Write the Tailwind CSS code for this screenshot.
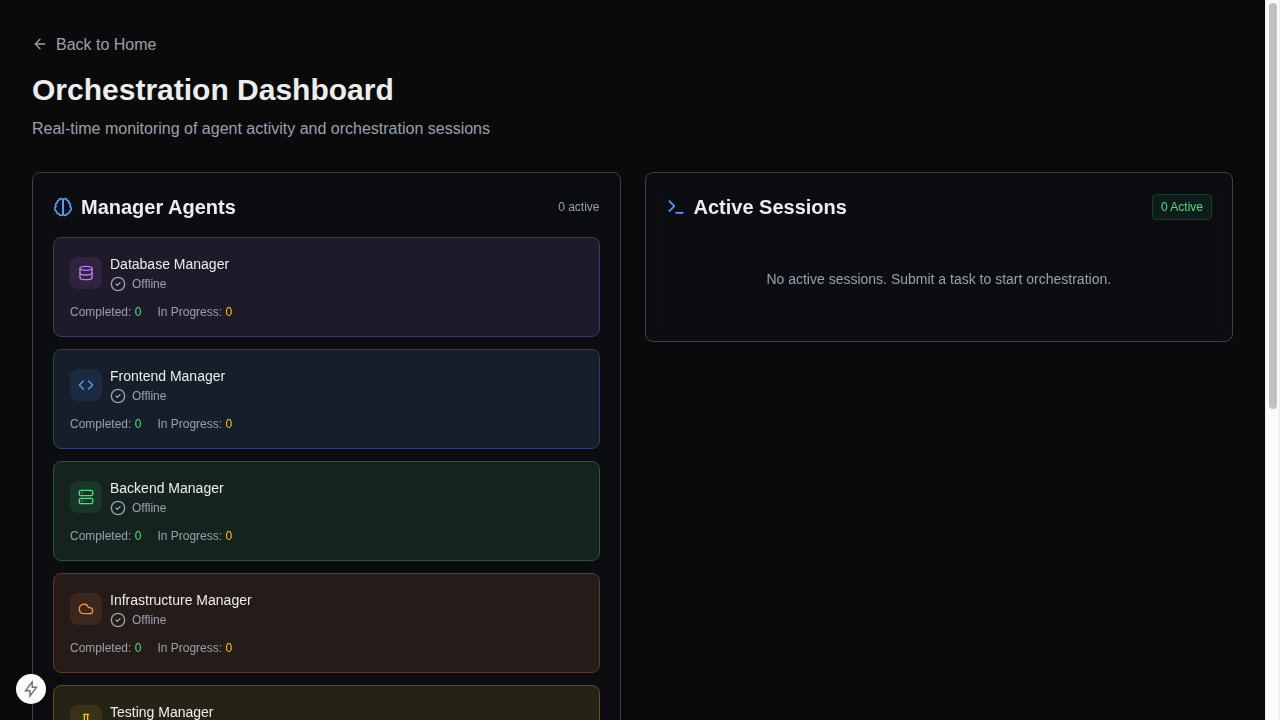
<!DOCTYPE html>
<html lang="en">
<head>
<meta charset="utf-8">
<title>Orchestration Dashboard</title>
<script src="https://cdn.jsdelivr.net/npm/@tailwindcss/browser@4"></script>
</head>
<body class="h-[720px] overflow-hidden bg-[#0a0a0a] font-['Liberation_Sans',Arial,sans-serif] text-[#ededed]">
<svg class="hidden">
  <symbol id="check" viewBox="0 0 24 24"><circle cx="12" cy="12" r="10"/><path d="m9 12 2 2 4-4"/></symbol>
</svg>
<div class="flex h-full">
<main class="h-full min-w-0 flex-1 overflow-hidden p-8">
  <a class="mb-4 flex h-6 items-center gap-2 text-[#99a1af]">
    <svg class="size-4" viewBox="0 0 24 24" fill="none" stroke="currentColor" stroke-width="2" stroke-linecap="round" stroke-linejoin="round"><path d="m12 19-7-7 7-7"/><path d="M19 12H5"/></svg>
    <span class="pt-0.5">Back to Home</span>
  </a>
  <h1 class="mb-2 text-3xl font-bold">Orchestration Dashboard</h1>
  <p class="mb-[31px] pt-px text-[#99a1af]">Real-time monitoring of agent activity and orchestration sessions</p>
  <div class="grid grid-cols-2 items-start gap-6">
    <section class="rounded-lg border border-[#364153] bg-[#101828]/25 p-5 backdrop-blur-sm">
      <div class="mb-4 flex items-center justify-between">
        <h2 class="flex items-center gap-2 text-xl font-bold">
          <svg class="size-5 text-[#51a2ff]" viewBox="0 0 24 24" fill="none" stroke="currentColor" stroke-width="2" stroke-linecap="round" stroke-linejoin="round"><path d="M9.500 2A2.500 2.500 0 0 1 12 4.500v15a2.500 2.500 0 0 1-4.960.440 2.500 2.500 0 0 1-2.960-3.080 3 3 0 0 1-.340-5.580 2.500 2.500 0 0 1 1.320-4.240 2.500 2.500 0 0 1 1.980-3A2.500 2.500 0 0 1 9.500 2Z"/><path d="M14.500 2A2.500 2.500 0 0 0 12 4.500v15a2.500 2.500 0 0 0 4.960.440 2.500 2.500 0 0 0 2.960-3.080 3 3 0 0 0 .340-5.580 2.500 2.500 0 0 0-1.320-4.240 2.500 2.500 0 0 0-1.980-3A2.500 2.500 0 0 0 14.500 2Z"/></svg>
          Manager Agents
        </h2>
        <span class="text-xs text-[#99a1af]">0 active</span>
      </div>
      <div class="flex flex-col gap-3">
        <article class="rounded-lg border border-[#4e316c] bg-[#1f1a2a] p-4">
          <div class="mb-3 flex items-center gap-2">
            <div class="rounded-lg bg-[#30233f] p-2 text-[#c27aff]"><svg class="size-4" viewBox="0 0 24 24" fill="none" stroke="currentColor" stroke-width="2" stroke-linecap="round" stroke-linejoin="round"><ellipse cx="12" cy="5" rx="9" ry="3"/><path d="M3 5v14a9 3 0 0 0 18 0V5"/><path d="M3 12a9 3 0 0 0 18 0"/></svg></div>
            <div><h3 class="text-sm">Database Manager</h3><div class="mt-0.5 flex items-center gap-1.5 text-xs text-[#99a1af]"><svg class="size-4" fill="none" stroke="currentColor" stroke-width="2" stroke-linecap="round" stroke-linejoin="round"><use href="#check"/></svg>Offline</div></div>
          </div>
          <div class="flex gap-4 text-xs text-[#99a1af]"><span>Completed: <span class="text-[#4ade80]">0</span></span><span>In Progress: <span class="text-[#fdc700]">0</span></span></div>
        </article>
        <article class="rounded-lg border border-[#264268] bg-[#151e29] p-4">
          <div class="mb-3 flex items-center gap-2">
            <div class="rounded-lg bg-[#1c2a41] p-2 text-[#51a2ff]"><svg class="size-4" viewBox="0 0 24 24" fill="none" stroke="currentColor" stroke-width="2" stroke-linecap="round" stroke-linejoin="round"><path d="m16 18 6-6-6-6"/><path d="m8 6-6 6 6 6"/></svg></div>
            <div><h3 class="text-sm">Frontend Manager</h3><div class="mt-0.5 flex items-center gap-1.5 text-xs text-[#99a1af]"><svg class="size-4" fill="none" stroke="currentColor" stroke-width="2" stroke-linecap="round" stroke-linejoin="round"><use href="#check"/></svg>Offline</div></div>
          </div>
          <div class="flex gap-4 text-xs text-[#99a1af]"><span>Completed: <span class="text-[#4ade80]">0</span></span><span>In Progress: <span class="text-[#fdc700]">0</span></span></div>
        </article>
        <article class="rounded-lg border border-[#205a39] bg-[#14231e] p-4">
          <div class="mb-3 flex items-center gap-2">
            <div class="rounded-lg bg-[#193528] p-2 text-[#4ade80]"><svg class="size-4" viewBox="0 0 24 24" fill="none" stroke="currentColor" stroke-width="2" stroke-linecap="round" stroke-linejoin="round"><rect width="20" height="8" x="2" y="2" rx="2"/><rect width="20" height="8" x="2" y="14" rx="2"/><path d="M6 6h.01M6 18h.01"/></svg></div>
            <div><h3 class="text-sm">Backend Manager</h3><div class="mt-0.5 flex items-center gap-1.5 text-xs text-[#99a1af]"><svg class="size-4" fill="none" stroke="currentColor" stroke-width="2" stroke-linecap="round" stroke-linejoin="round"><use href="#check"/></svg>Offline</div></div>
          </div>
          <div class="flex gap-4 text-xs text-[#99a1af]"><span>Completed: <span class="text-[#4ade80]">0</span></span><span>In Progress: <span class="text-[#fdc700]">0</span></span></div>
        </article>
        <article class="rounded-lg border border-[#65391f] bg-[#251b18] p-4">
          <div class="mb-3 flex items-center gap-2">
            <div class="rounded-lg bg-[#3b271b] p-2 text-[#ff8f3c]"><svg class="size-4" viewBox="0 0 24 24" fill="none" stroke="currentColor" stroke-width="2" stroke-linecap="round" stroke-linejoin="round"><path d="M17.500 19H9a7 7 0 1 1 6.710-9h1.790a4.500 4.500 0 1 1 0 9Z"/></svg></div>
            <div><h3 class="text-sm">Infrastructure Manager</h3><div class="mt-0.5 flex items-center gap-1.5 text-xs text-[#99a1af]"><svg class="size-4" fill="none" stroke="currentColor" stroke-width="2" stroke-linecap="round" stroke-linejoin="round"><use href="#check"/></svg>Offline</div></div>
          </div>
          <div class="flex gap-4 text-xs text-[#99a1af]"><span>Completed: <span class="text-[#4ade80]">0</span></span><span>In Progress: <span class="text-[#fdc700]">0</span></span></div>
        </article>
        <article class="rounded-lg border border-[#5f5015] bg-[#252316] p-4">
          <div class="flex items-center gap-2">
            <div class="rounded-lg bg-[#3a3217] p-2 text-[#fdc700]"><svg class="size-4" viewBox="0 0 24 24" fill="none" stroke="currentColor" stroke-width="2" stroke-linecap="round" stroke-linejoin="round"><path d="M14.500 2v17.500c0 1.400-1.100 2.500-2.500 2.500s-2.500-1.100-2.500-2.500V2"/><path d="M8.500 2h7"/><path d="M14.500 16h-5"/></svg></div>
            <div class="h-[38px]"><h3 class="text-sm">Testing Manager</h3></div>
          </div>
        </article>
      </div>
    </section>
    <section class="rounded-lg border border-[#364153] bg-[#101828]/25 p-5 backdrop-blur-sm">
      <div class="mb-4 flex items-center justify-between">
        <h2 class="flex items-center gap-2 text-xl font-bold">
          <svg class="size-5 text-[#51a2ff]" viewBox="0 0 24 24" fill="none" stroke="currentColor" stroke-width="2" stroke-linecap="round" stroke-linejoin="round"><path d="m4 17 6-6-6-6"/><path d="M12 19h8"/></svg>
          Active Sessions
        </h2>
        <span class="rounded border border-[#11402a] bg-[#101c1b] px-2 py-1 text-xs text-[#4ade80]">0 Active</span>
      </div>
      <p class="py-8 text-center text-sm text-[#99a1af]">No active sessions. Submit a task to start orchestration.</p>
    </section>
  </div>
</main>
<!-- scroll track -->
<div class="w-[15px] shrink-0 border-x border-[#ededed] bg-[#fafafa] pt-[3px] pl-[3px]"><div class="h-[406px] w-2 rounded-full bg-[#c1c1c1]"></div></div>
</div>
<button class="fixed bottom-4 left-4 flex size-[30px] items-center justify-center rounded-full bg-white text-[#707070]">
  <svg class="h-[18px] w-[14px]" viewBox="0 0 14 18" fill="none" stroke="currentColor" stroke-width="1.400"><path d="M8.200 2 1.500 10.800H6V16L12.500 7.200H8.200Z"/></svg>
</button>
</body>
</html>
